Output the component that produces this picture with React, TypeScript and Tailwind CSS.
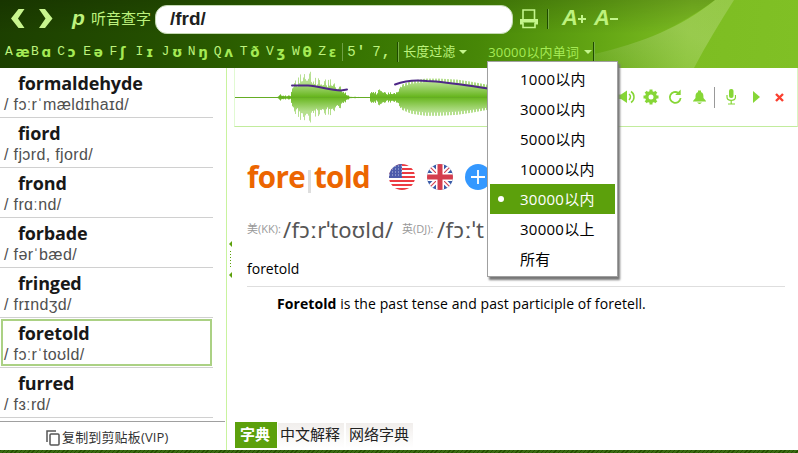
import type { ReactNode } from 'react';

const phonemes = [
  ['A', 'æ'], ['B', 'ɑ'], ['C', 'ɔ'], ['E', 'ə'], ['F', 'ʃ'], ['I', 'ɪ'], ['J', 'ʊ'],
  ['N', 'ŋ'], ['Q', 'ʌ'], ['T', 'ð'], ['V', 'ʒ'], ['W', 'θ'], ['Z', 'ɛ'],
];

const words = [
  { word: 'formaldehyde', ipa: '/ fɔːrˈmældɪhaɪd/' },
  { word: 'fiord', ipa: '/ fjɔrd, fjord/' },
  { word: 'frond', ipa: '/ frɑːnd/' },
  { word: 'forbade', ipa: '/ fərˈbæd/' },
  { word: 'fringed', ipa: '/ frɪndʒd/' },
  { word: 'foretold', ipa: '/ fɔːrˈtoʊld/' },
  { word: 'furred', ipa: '/ fɜːrd/' },
];

const limits = ['1000以内', '3000以内', '5000以内', '10000以内', '30000以内', '30000以上', '所有'];

const ui = "font-['Open_Sans','Noto_Sans_CJK_SC',sans-serif]";

function Caret() {
  return <span className="h-0 w-0 border-x-4 border-t-4 border-x-transparent border-t-[#c4f58c]" />;
}

function Divider({ className = '' }: { className?: string }) {
  return <span className={`w-[2px] border-l border-r border-l-[#1f4a00] border-r-[#76ad45] ${className}`} />;
}

function Header() {
  return (
    <header className="relative h-[68px] overflow-hidden bg-[linear-gradient(96deg,#1c3f00_0%,#244f00_20%,#347000_42%,#478707_60%,#64a614_75%,#7dbd22_86%,#80c025_100%)] text-[#bdf27d]">
      <svg className="absolute inset-0" width="798" height="68" aria-hidden="true">
        <defs>
          <linearGradient id="shade" x1="0" y1="0" x2="0" y2="1">
            <stop offset="0" stopColor="#000" stopOpacity=".16" />
            <stop offset=".5" stopColor="#000" stopOpacity="0" />
          </linearGradient>
          <linearGradient id="beam" x1="0" y1="1" x2="1" y2="0">
            <stop offset="0" stopColor="#fff" stopOpacity=".04" />
            <stop offset=".6" stopColor="#e6f0c8" stopOpacity=".26" />
            <stop offset="1" stopColor="#e6f0c8" stopOpacity=".22" />
          </linearGradient>
        </defs>
        <path d="M0 0H715C680 26 640 44 594 54L560 68H0Z" fill="url(#shade)" />
        <path d="M594 54C642 43 682 27 715 0H734C720 22 706 45 694 68H594Z" fill="url(#beam)" />
      </svg>
      <div className="relative flex h-[37px] items-center">
        <svg className="ml-[11px] shrink-0" width="43" height="20" viewBox="0 0 43 20" fill="#c8f58e" aria-hidden="true">
          <path d="M7.5 0H13.5L7 9.5L13.5 19H7.5L0 9.5Z" />
          <path d="M28 0H34L41.5 9.5L34 19H28L34.5 9.5Z" />
        </svg>
        <span className="mb-[2px] ml-[18px] w-[19px] font-['Liberation_Sans',sans-serif] text-[21px] font-bold italic leading-5">p</span>
        <span className={`${ui} w-[64px] whitespace-nowrap text-[15px]`}>听音查字</span>
        <div className="mt-[2px] flex h-[29px] w-[358px] items-center rounded-[12px] border border-[#c5dab4] bg-white pl-[14px] font-['Liberation_Sans',sans-serif] text-[19px] font-bold text-[#202020]">
          /frd/
        </div>
        <svg className="ml-[6px] shrink-0" width="20" height="20" viewBox="0 0 20 20" fill="none" stroke="#c4f58c" strokeWidth="1.6" aria-hidden="true">
          <path d="M4 10V1H15.5V10" />
          <path d="M1 10H19V15.5H1Z" fill="#c4f58c" stroke="none" />
          <path d="M4 13.5V18.5H16V13.5" fill="#4b8b0c" />
        </svg>
        <Divider className="ml-[8px] h-[20px]" />
        <span className="mb-[2px] ml-[13px] flex w-[32px] items-center font-['Liberation_Sans',sans-serif] text-[22px] font-bold italic leading-5">
          A
          <svg className="mt-[3px]" width="8" height="8" viewBox="0 0 8 8" stroke="#c4f58c" strokeWidth="2" aria-hidden="true">
            <path d="M4 0V8M0 4H8" />
          </svg>
        </span>
        <span className="mb-[2px] flex items-center font-['Liberation_Sans',sans-serif] text-[22px] font-bold italic leading-5">
          A<span className="mt-[3px] h-[2px] w-[8px] bg-[#c4f58c]" />
        </span>
      </div>
      <div className="relative flex h-[30px] items-center">
        <div className="flex pl-[5px]">
          {phonemes.map(([letter, sound]) => (
            <span key={letter} className="flex w-[26.1px] items-center leading-5">
              <span className="w-[10.5px] font-['Liberation_Mono',monospace] text-[13px]">{letter}</span>
              <span className="font-['DejaVu_Sans',sans-serif] text-[13.5px] font-bold text-[#a5ea55]">{sound}</span>
            </span>
          ))}
        </div>
        <span className="ml-[-2px] h-[18px] w-px bg-[#6fa045]" />
        <span className="ml-[4px] w-[25px] font-['Liberation_Mono',monospace] text-[14px]">5<b className="ml-[1px]">'</b></span>
        <span className="w-[25px] font-['Liberation_Mono',monospace] text-[14px]">7<b className="ml-[1px]">,</b></span>
        <Divider className="h-[20px]" />
        <span className={`${ui} ml-[4px] w-[56px] whitespace-nowrap text-[13px]`}>长度过滤</span>
        <Caret />
        <span className={`${ui} ml-[21px] w-[96px] whitespace-nowrap pt-[2px] text-[13px] tracking-[0.2px] text-[#a5ea55]`}>30000以内单词</span>
        <Caret />
        <Divider className="ml-px h-[20px]" />
      </div>
    </header>
  );
}

function Sidebar() {
  return (
    <aside className="flex w-[227px] shrink-0 flex-col border-r border-[#c9f39f]">
      <ul className="h-[353px]">
        {words.map(({ word, ipa }) => (
          <li key={word} className="h-[50px] w-[213px] border-b border-[#d0d0d0] pt-px">
            <div className={`h-[47px] border-2 ${word === 'foretold' ? 'ml-px w-[211px] border-[#abd184] pl-px' : 'w-[212px] border-transparent pl-[2px]'}`}>
              <div className="pl-[14px] font-['Open_Sans',sans-serif] text-[18px] font-bold leading-[25px] tracking-[-0.15px] text-[#181818]">{word}</div>
              <div className="whitespace-nowrap font-['Liberation_Sans','DejaVu_Sans',sans-serif] text-[16px] leading-[18px] tracking-[0.36px] text-[#505050]">{ipa}</div>
            </div>
          </li>
        ))}
      </ul>
      <div className="flex h-[29px] w-[225px] items-center border-t border-[#a0a0a0] pl-[46px] pt-[3px]">
        <svg width="14" height="16" viewBox="0 0 14 16" fill="none" stroke="#555" strokeWidth="1.5" aria-hidden="true">
          <path d="M1 12V1H10" />
          <rect x="4" y="4" width="9" height="11" rx="1" />
        </svg>
        <span className={`${ui} ml-[2px] whitespace-nowrap text-[13px] tracking-[0.15px] text-[#333]`}>复制到剪贴板(VIP)</span>
      </div>
    </aside>
  );
}

function Splitter() {
  return (
    <div className="flex w-[7px] shrink-0 flex-col items-center pt-[173px]">
      <span className="h-0 w-0 border-y-[3px] border-r-[3px] border-y-transparent border-r-[#5ca00c]" />
      <span className="my-[4px] h-[16px] w-px bg-[repeating-linear-gradient(180deg,#5ca00c_0_1px,transparent_1px_3px)]" />
      <span className="mt-px h-0 w-0 border-y-[3px] border-r-[3px] border-y-transparent border-r-[#5ca00c]" />
    </div>
  );
}

/* Half-height of the wave at each sampled column, relative to its left edge. */
function amplitude(x: number) {
  const points = [
    [0, 0], [41, 0], [42, 1], [45, 3], [49, 2], [55, 2], [57, 14], [66, 23], [72, 29], [78, 20], [90, 18],
    [97, 17], [103, 13], [107, 8], [114, 1], [134, 0], [136, 8], [141, 5], [145, 10], [150, 5], [162, 5],
    [166, 12], [176, 16], [190, 18], [204, 18], [222, 17], [236, 15], [253, 12], [300, 7], [370, 1],
  ];
  const i = points.findIndex((p) => p[0] > x);
  if (i < 1) return 0;
  const [x0, y0] = points[i - 1];
  const [x1, y1] = points[i];
  return y0 + ((x - x0) / (x1 - x0)) * (y1 - y0);
}

const ripple = [1, 0.65, 0.92, 0.6, 0.8, 1.05, 0.58, 0.9, 0.7, 1];

function WaveForm() {
  const columns = Array.from({ length: 370 }, (_, x) => {
    const voiced = x > 160;
    const a = amplitude(x) * (voiced ? (x % 3 === 1 ? 0.86 : 1.05) : x % 3 === 1 ? 0.68 : ripple[(x * 3) % 10]);
    return `M${x + 0.5} ${29.5 - a}V${29.5 + a * 0.97}`;
  }).join('');
  return (
    <svg className="shrink-0" width="370" height="58" viewBox="0 0 370 58" aria-hidden="true">
      <defs>
        <linearGradient id="wave" gradientUnits="userSpaceOnUse" x1="0" y1="0" x2="0" y2="58">
          <stop offset="0" stopColor="#bde29c" />
          <stop offset=".25" stopColor="#b4df8d" />
          <stop offset=".5" stopColor="#66b51c" />
          <stop offset=".75" stopColor="#b4df8d" />
          <stop offset="1" stopColor="#bde29c" />
        </linearGradient>
      </defs>
      <path d={columns} stroke="url(#wave)" />
      <rect y="29" width="370" height="1" fill="#65ad24" />
      <g fill="none" stroke="#4e2787" strokeWidth="2" strokeLinecap="round">
        <path d="M57 17.5H73C84 18 94 22 106 22.5L112 21.5" />
        <path d="M160 16.5C169 13 180 11.5 192 13C215 14 234 18 264 22" />
      </g>
    </svg>
  );
}

function Icon({ width, children }: { width: number; children: ReactNode }) {
  return (
    <svg className="shrink-0" width={width} height="18" viewBox={`0 0 ${width} 18`} fill="#86d636" aria-hidden="true">
      {children}
    </svg>
  );
}

function Player() {
  return (
    <section className="flex h-[59px] border border-t-0 border-[#c2ec9d] border-l-[#e1fad2] border-r-[#d9f6c2]">
      <WaveForm />
      <div className="ml-[12px] flex items-center">
        <Icon width={19}>
          <path d="M1 6.5H4L10 2.5V15L4 11H1Z" />
          <path d="M12 6C14 7.5 14 10 12 12M14 3.5C18 6 18 12 14 14.5" fill="none" stroke="#86d636" strokeWidth="1.5" />
        </Icon>
        <span className="w-[7px]" />
        <Icon width={16}>
          <circle cx="8" cy="9" r="4.2" fill="none" stroke="#86d636" strokeWidth="3.4" />
          <path d="M8 1.5V4M8 14V16.5M.5 9H3M13 9H15.5M2.7 3.7L4.5 5.5M11.5 12.5L13.3 14.3M13.3 3.7L11.5 5.5M4.5 12.5L2.7 14.3" stroke="#86d636" strokeWidth="3" />
        </Icon>
        <span className="w-[9px]" />
        <Icon width={14}>
          <path d="M10.3 5A5.4 5.4 0 1 0 12.6 10" fill="none" stroke="#86d636" strokeWidth="1.8" />
          <path d="M12.7 1.5V7H7.2Z" />
        </Icon>
        <span className="w-[11px]" />
        <Icon width={13}>
          <path d="M5 2.5H8V4C10 5 10.5 6 10.5 10L13 13V13.5H0V13L2.5 10C2.5 6 3 5 5 4ZM4 14.5H9L7 16H6Z" />
        </Icon>
        <span className="ml-[8px] h-[21px] w-px bg-[#999]" />
        <span className="w-[11px]" />
        <Icon width={10}>
          <rect x="3" y="1" width="4.5" height="9" rx="2" />
          <path d="M1 7V9C1 13.5 9.5 13.5 9.5 9V7M5.2 12V16M2 16H9" fill="none" stroke="#86d636" strokeWidth="1.2" />
        </Icon>
        <span className="w-[17px]" />
        <Icon width={7}><path d="M0 3L7 9L0 15Z" /></Icon>
        <span className="w-[15px]" />
        <Icon width={9}><path d="M1 6L8 13M8 6L1 13" stroke="#fa4030" strokeWidth="2.4" /></Icon>
      </div>
    </section>
  );
}

function Flags() {
  return (
    <div className="flex gap-[12px]">
      <svg width="26" height="26" viewBox="0 0 26 26" aria-label="US">
        <defs><clipPath id="round"><circle cx="13" cy="13" r="13" /></clipPath></defs>
        <g clipPath="url(#round)">
          <rect width="26" height="26" fill="#fff" />
          {[0, 1, 2, 3, 4, 5, 6].map((n) => <rect key={n} y={n * 4} width="26" height="2" fill="#ed3b42" />)}
          <rect width="13" height="14" fill="#4c5cac" />
          <path d="M0 2H13M0 5H13M0 8H13M0 11H13" stroke="#bcc5e4" strokeDasharray="1 2" />
        </g>
      </svg>
      <svg width="26" height="26" viewBox="0 0 26 26" aria-label="UK">
        <g clipPath="url(#round)">
          <rect width="26" height="26" fill="#385aa7" />
          <path d="M0 0L26 26M26 0L0 26" stroke="#fff" strokeWidth="5" />
          <path d="M0 0L26 26M26 0L0 26" stroke="#d64553" strokeWidth="1.2" />
          <path d="M13 0V26M0 13H26" stroke="#fff" strokeWidth="8" />
          <path d="M13 0V26M0 13H26" stroke="#d43d4d" strokeWidth="5" />
        </g>
      </svg>
      <svg width="26" height="26" viewBox="0 0 26 26" aria-hidden="true">
        <circle cx="13" cy="13" r="13" fill="#3498ff" />
        <path d="M13 6V20M6 13H20" stroke="#fff" strokeWidth="1.8" />
      </svg>
    </div>
  );
}

function Entry() {
  return (
    <article className={`${ui} h-[295px] pl-[13px] pt-[29px]`}>
      <div className="flex h-[42px] items-center">
        <h1 className="flex w-[142px] items-center text-[29.5px] font-bold leading-[40px] tracking-[-0.65px] text-[#ec6500]">
          fore<span className="ml-[3px] mr-[3px] mt-[9px] h-[23px] w-[3px] bg-[#dedede]" />told
        </h1>
        <Flags />
      </div>
      <div className="mt-[14px] flex h-[34px] items-center whitespace-nowrap text-[22px] text-[#555]">
        <span className="w-[36px] text-[11px] text-[#999]">美(KK):</span>
        <span className="w-[119px] font-['Noto_Sans',sans-serif] tracking-[0.2px]">/fɔːrˈtoʊld/</span>
        <span className="w-[35px] text-[11px] text-[#999]">英(DJ):</span>
        <span className="font-['Noto_Sans',sans-serif] tracking-[0.4px]">/fɔːˈt</span>
      </div>
      <p className="mt-[11px] h-[30px] w-[538px] border-b border-[#dedede] text-[14px] leading-[23px] text-black">foretold</p>
      <p className="pl-[30px] pt-[6px] text-[14px] leading-[22px] tracking-[0.075px] text-black">
        <b className="tracking-[0.08px]">Foretold</b> is the past tense and past participle of foretell.
      </p>
    </article>
  );
}

function Tabs() {
  return (
    <nav className={`${ui} flex h-[28px] whitespace-nowrap text-[15px] text-[#222]`}>
      <span className="ml-px flex h-[26px] w-[42px] items-center justify-center bg-[#5ca00c] pb-[2px] pr-[2px] font-bold text-white">字典</span>
      <span className="ml-[1px] mt-px flex h-[25px] w-[66px] items-center justify-center bg-linear-to-b from-[#f1eeec] to-white pb-[3px] pr-[2px]">中文解释</span>
      <span className="ml-[2px] mt-px flex h-[25px] w-[67px] items-center justify-center bg-linear-to-b from-[#f1eeec] to-white pb-[3px] pr-px">网络字典</span>
    </nav>
  );
}

function LimitMenu() {
  return (
    <ul className={`${ui} absolute left-[487px] top-[61px] h-[216px] w-[131px] border border-[#a0a0a0] bg-white p-[2px] text-[15px] tracking-[0.25px] text-black shadow-[2px_3px_2px_#777]`}>
      {limits.map((limit) => (
        <li key={limit} className={`flex h-[30px] items-center whitespace-nowrap ${limit === '30000以内' ? 'bg-[#5ca00c] text-white' : ''}`}>
          <span className="flex w-[30px] pl-[8px]">
            {limit === '30000以内' && <span className="h-[6px] w-[6px] rounded-full bg-white" />}
          </span>
          {limit}
        </li>
      ))}
    </ul>
  );
}

export default function App() {
  return (
    <div className="relative h-[453px] w-[798px] overflow-hidden bg-white">
      <Header />
      <div className="flex h-[382px]">
        <Sidebar />
        <Splitter />
        <main className="flex w-[564px] flex-col">
          <Player />
          <Entry />
          <Tabs />
        </main>
      </div>
      <footer className="h-[3px] bg-[repeating-linear-gradient(135deg,#245000_0_1px,#396b12_1px_3px)]" />
      <LimitMenu />
    </div>
  );
}
